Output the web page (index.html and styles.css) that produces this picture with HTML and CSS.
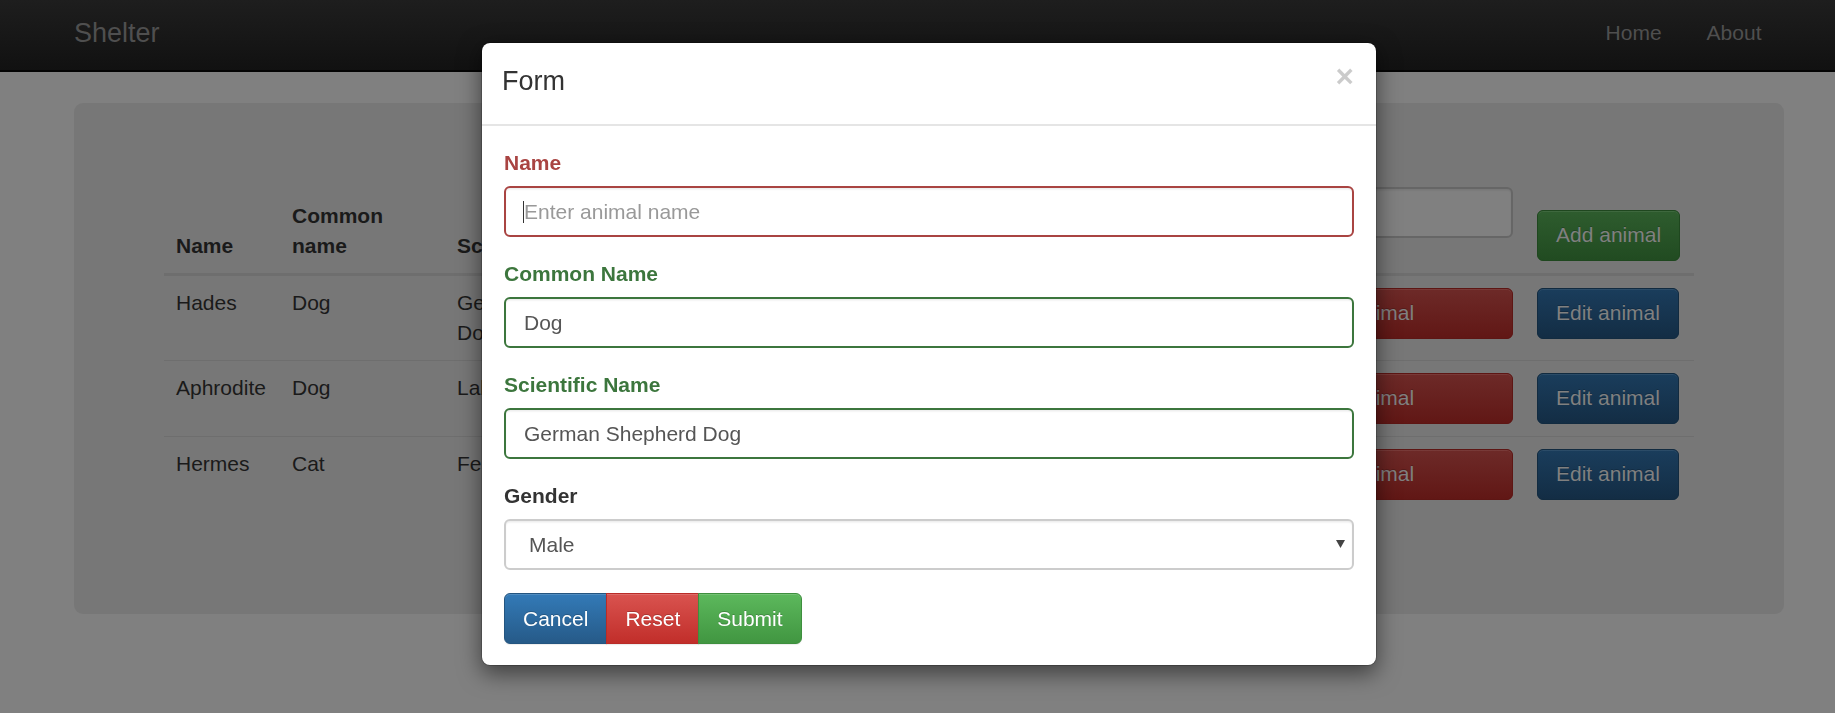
FILE: index.html
```html
<!DOCTYPE html>
<html lang="en">
<head>
<meta charset="utf-8">
<title>Shelter</title>
<link rel="stylesheet" href="styles.css">
</head>
<body class="modal-open">
<nav class="navbar">
  <div class="container navbar-inner">
    <a class="brand" href="#">Shelter</a>
    <ul class="nav">
      <li><a href="#">Home</a></li>
      <li><a href="#">About</a></li>
    </ul>
  </div>
</nav>

<main class="container">
  <div class="jumbotron">
    <table class="table">
      <thead>
        <tr>
          <th class="col-name">Name</th>
          <th class="col-common">Common name</th>
          <th class="col-sci">Scientific name</th>
          <th class="col-gender">Gender</th>
          <th class="col-del"><div class="form-group"><input class="form-control dim-control" type="text"></div></th>
          <th class="col-edit"><button class="btn dim-success" type="button">Add animal</button></th>
        </tr>
      </thead>
      <tbody>
        <tr>
          <td>Hades</td>
          <td>Dog</td>
          <td>German Shepherd Dog</td>
          <td>Male</td>
          <td><button class="btn dim-danger btn-block" type="button">Delete animal</button></td>
          <td><button class="btn dim-primary" type="button">Edit animal</button></td>
        </tr>
        <tr>
          <td>Aphrodite</td>
          <td>Dog</td>
          <td>Labrador Retriever</td>
          <td>Female</td>
          <td><button class="btn dim-danger btn-block" type="button">Delete animal</button></td>
          <td><button class="btn dim-primary" type="button">Edit animal</button></td>
        </tr>
        <tr>
          <td>Hermes</td>
          <td>Cat</td>
          <td>Felis catus</td>
          <td>Male</td>
          <td><button class="btn dim-danger btn-block" type="button">Delete animal</button></td>
          <td><button class="btn dim-primary" type="button">Edit animal</button></td>
        </tr>
      </tbody>
    </table>
  </div>
</main>

<div class="modal">
  <div class="modal-dialog">
    <div class="modal-header">
      <h4 class="modal-title">Form</h4>
      <button class="close" type="button">&times;</button>
    </div>
    <div class="modal-body">
      <form>
        <div class="form-group has-error">
          <label class="control-label">Name</label>
          <div class="input-wrap">
            <input class="form-control" type="text" placeholder="Enter animal name">
            <span class="caret-line"></span>
          </div>
        </div>
        <div class="form-group has-success">
          <label class="control-label">Common Name</label>
          <input class="form-control" type="text" value="Dog">
        </div>
        <div class="form-group has-success">
          <label class="control-label">Scientific Name</label>
          <input class="form-control" type="text" value="German Shepherd Dog">
        </div>
        <div class="form-group form-group-last">
          <label class="control-label">Gender</label>
          <div class="select-wrap">
            <select class="form-control form-select">
              <option>Male</option>
              <option>Female</option>
            </select>
            <svg class="select-arrow" width="9" height="8" viewBox="0 0 9 8"><polygon points="0,0 9,0 4.5,8" fill="#444"/></svg>
          </div>
        </div>
        <div class="btn-group">
          <button class="btn btn-primary" type="button">Cancel</button>
          <button class="btn btn-danger" type="button">Reset</button>
          <button class="btn btn-success" type="button">Submit</button>
        </div>
      </form>
    </div>
  </div>
</div>
</body>
</html>
```

FILE: styles.css
```css
/* The page behind the open modal is drawn in its dimmed (50% black backdrop) colours. */
* {
  box-sizing: border-box;
}

html {
  margin: 0;
  padding: 0;
  background-color: #808080;
}

body {
  margin: 0;
  padding: 0;
  font-family: "Liberation Sans", Arial, Helvetica, sans-serif;
  font-size: 21px;
  line-height: 30px;
  color: #1a1a1a;
  background-color: #808080;
  overflow: hidden;
}

.modal-open {
  min-height: 713px;
}

.container {
  width: 1710px;
  margin-left: 74px;
}

/* Navbar */
.navbar {
  height: 72px;
  background-color: #181818;
  background-image: linear-gradient(to bottom, #1e1e1e 0, #111 100%);
  border-bottom: 2px solid #040404;
  margin-bottom: 31px;
}

.navbar-inner {
  display: flex;
  justify-content: space-between;
  height: 70px;
}

.brand {
  display: block;
  font-size: 27px;
  line-height: 30px;
  padding-top: 17.5px;
  color: #4f4f4f;
  text-decoration: none;
}

.nav {
  list-style: none;
  margin: 0;
  padding: 0;
  display: flex;
}

.nav a {
  display: block;
  padding: 18px 22.5px 0;
  line-height: 30px;
  color: #4f4f4f;
  text-decoration: none;
}

/* Jumbotron */
.jumbotron {
  background-color: #777777;
  border-radius: 9px;
  padding: 72px 90px;
}

.table {
  width: 100%;
  border-collapse: collapse;
  table-layout: fixed;
  margin-bottom: 30px;
  color: #1a1a1a;
}

.table th {
  text-align: left;
  font-weight: bold;
  vertical-align: bottom;
  padding: 12px;
  border-bottom: 3px solid #6e6e6e;
}

.table td {
  vertical-align: top;
  padding: 12px;
  border-top: 1px solid #6e6e6e;
}

.col-name { width: 116px; }
.col-common { width: 165px; }
.col-sci { width: 224px; }
.col-del { width: 350px; }
.col-edit { width: 169px; }

.table .btn {
  display: block;
  width: max-content;
}

.table .btn-block {
  width: 100%;
}

.table .form-group {
  margin-bottom: 22.5px;
}

/* Form controls */
.form-control {
  display: block;
  width: 100%;
  height: 51px;
  padding: 0 18px;
  font-family: inherit;
  font-size: 21px;
  line-height: 30px;
  color: #555;
  background-color: #fff;
  border: 2px solid #ccc;
  border-radius: 6px;
  box-shadow: inset 0 1.5px 1.5px rgba(0, 0, 0, .075);
  outline: none;
}

.form-control::placeholder {
  color: #999;
}

.table .dim-control {
  background-color: #808080;
  border-color: #666;
}

/* Buttons */
.btn {
  display: inline-block;
  margin: 0;
  font-family: inherit;
  font-size: 21px;
  line-height: 30px;
  padding: 9.5px 18px;
  border: 1px solid transparent;
  border-radius: 6px;
  color: #fff;
  text-align: center;
  text-shadow: 0 -1px 0 rgba(0, 0, 0, .2);
  box-shadow: inset 0 1px 0 rgba(255, 255, 255, .15), 0 1px 1px rgba(0, 0, 0, .075);
  white-space: nowrap;
  cursor: pointer;
}

.btn-primary {
  background-image: linear-gradient(to bottom, #337ab7 0, #265a88 100%);
  border-color: #245580;
}

.btn-success {
  background-image: linear-gradient(to bottom, #5cb85c 0, #419641 100%);
  border-color: #3e8f3e;
}

.btn-danger {
  background-image: linear-gradient(to bottom, #d9534f 0, #c12e2a 100%);
  border-color: #b92c28;
}

.table .dim-primary,
.table .dim-success,
.table .dim-danger {
  color: #808080;
  box-shadow: inset 0 1px 0 rgba(255, 255, 255, .08);
}

.table .dim-primary {
  background-color: #163550;
  background-image: linear-gradient(to bottom, #1a3d5c 0, #132d44 100%);
  border-color: #122b40;
}

.table .dim-success {
  background-color: #285428;
  background-image: linear-gradient(to bottom, #2e5c2e 0, #214b21 100%);
  border-color: #1f471f;
}

.table .dim-danger {
  background-color: #672120;
  background-image: linear-gradient(to bottom, #6d2a28 0, #611715 100%);
  border-color: #5d1614;
}

/* Modal */
.modal {
  position: fixed;
  top: 0;
  left: 0;
  width: 100%;
  height: 100%;
  z-index: 20;
}

.modal-dialog {
  width: 896px;
  margin: 42px 0 0 481px;
  background-color: #fff;
  background-clip: padding-box;
  border: 1px solid rgba(0, 0, 0, .2);
  border-radius: 9px;
  box-shadow: 0 7.5px 22.5px rgba(0, 0, 0, .5);
}

.modal-header {
  display: flex;
  justify-content: space-between;
  align-items: flex-start;
  padding: 19px 22px 24px 20px;
  border-bottom: 2px solid #e5e5e5;
}

.modal-title {
  margin: 0;
  font-size: 27px;
  line-height: 38px;
  font-weight: normal;
  color: #333;
}

.close {
  margin: -1px 0 0 0;
  padding: 0;
  background: none;
  border: 0;
  font-family: "Liberation Sans", Arial, sans-serif;
  font-size: 31.5px;
  line-height: 31.5px;
  font-weight: bold;
  color: #000;
  opacity: .2;
  cursor: pointer;
}

.modal-body {
  padding: 22px 22px 21px;
  color: #333;
}

.modal-body form {
  margin: 0;
}

.modal-body .form-group {
  margin-bottom: 22px;
}

.modal-body .form-group-last {
  margin-bottom: 23px;
}

.control-label {
  display: block;
  font-weight: bold;
  margin-bottom: 8px;
}

.has-error .control-label { color: #a94442; }
.has-error .form-control { border-color: #a94442; }
.has-success .control-label { color: #3c763d; }
.has-success .form-control { border-color: #3c763d; }

.input-wrap {
  position: relative;
}

.caret-line {
  position: absolute;
  left: 19px;
  top: 15px;
  width: 1px;
  height: 22px;
  background-color: #333;
}

.select-wrap {
  position: relative;
}

.form-select {
  appearance: none;
  -webkit-appearance: none;
  padding-left: 23px;
}

.select-arrow {
  position: absolute;
  right: 9px;
  top: 21px;
}

.btn-group {
  display: flex;
}

.btn-group .btn {
  border-radius: 0;
}

.btn-group .btn:first-child {
  border-radius: 6px 0 0 6px;
}

.btn-group .btn:last-child {
  border-radius: 0 6px 6px 0;
}

.btn-group .btn + .btn {
  margin-left: -1px;
}
```
